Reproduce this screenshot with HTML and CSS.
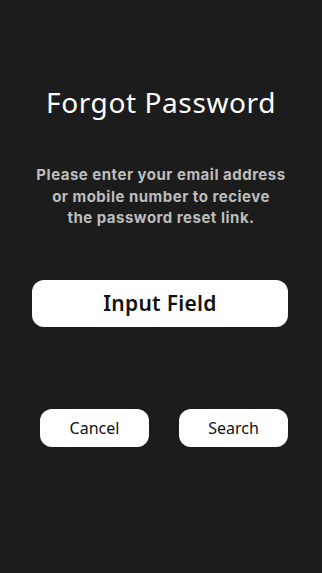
FILE: index.html
```html
<!DOCTYPE html>
<html lang="en">
<head>
  <meta charset="UTF-8" />
  <meta name="viewport" content="width=device-width, initial-scale=1.0"/>
  <title>Forgot Password</title>
  <link rel="stylesheet" href="styles.css">
</head>
<body>

  <div class="screen">
    <h1 class="title">Forgot Password</h1>

    <p class="hint">Please enter your email address<br>or mobile number to recieve<br>the password reset link.</p>

    <div class="field">Input Field</div>

    <div class="actions">
      <button class="btn">Cancel</button>
      <button class="btn">Search</button>
    </div>
  </div>

</body>
</html>
```

FILE: styles.css
```css
body {
  margin: 0;
  padding: 0;
  background: #1c1c1c;
}

.screen {
  height: 573px;
  padding-top: 84px;
  box-sizing: border-box;
  display: flex;
  flex-direction: column;
  align-items: center;
}

.title {
  margin: 0;
  font-family: 'Noto Sans', sans-serif;
  font-weight: 400;
  font-size: 28px;
  letter-spacing: 0.6px;
  line-height: 36px;
  color: #ffffff;
}

.hint {
  margin: 44px 0 0;
  width: 270px;
  text-align: center;
  font-family: 'Inter', sans-serif;
  font-weight: 700;
  font-size: 15px;
  letter-spacing: 0.5px;
  line-height: 21.5px;
  color: #bdbdbd;
}

.field {
  margin-top: 51px;
  margin-right: 2px;
  width: 256px;
  height: 47px;
  background: #ffffff;
  border-radius: 12px;
  display: flex;
  align-items: center;
  justify-content: center;
  font-family: 'Noto Sans', sans-serif;
  font-weight: 600;
  font-size: 21px;
  letter-spacing: 0.3px;
  color: #111;
}

.actions {
  margin-top: 82px;
  margin-left: 6px;
  width: 248px;
  display: flex;
  justify-content: space-between;
}

.btn {
  width: 109px;
  height: 38px;
  background: #ffffff;
  border: none;
  border-radius: 12px;
  font-family: 'Noto Sans', sans-serif;
  font-weight: 400;
  font-size: 16px;
  color: #111;
  padding: 0;
}
```
